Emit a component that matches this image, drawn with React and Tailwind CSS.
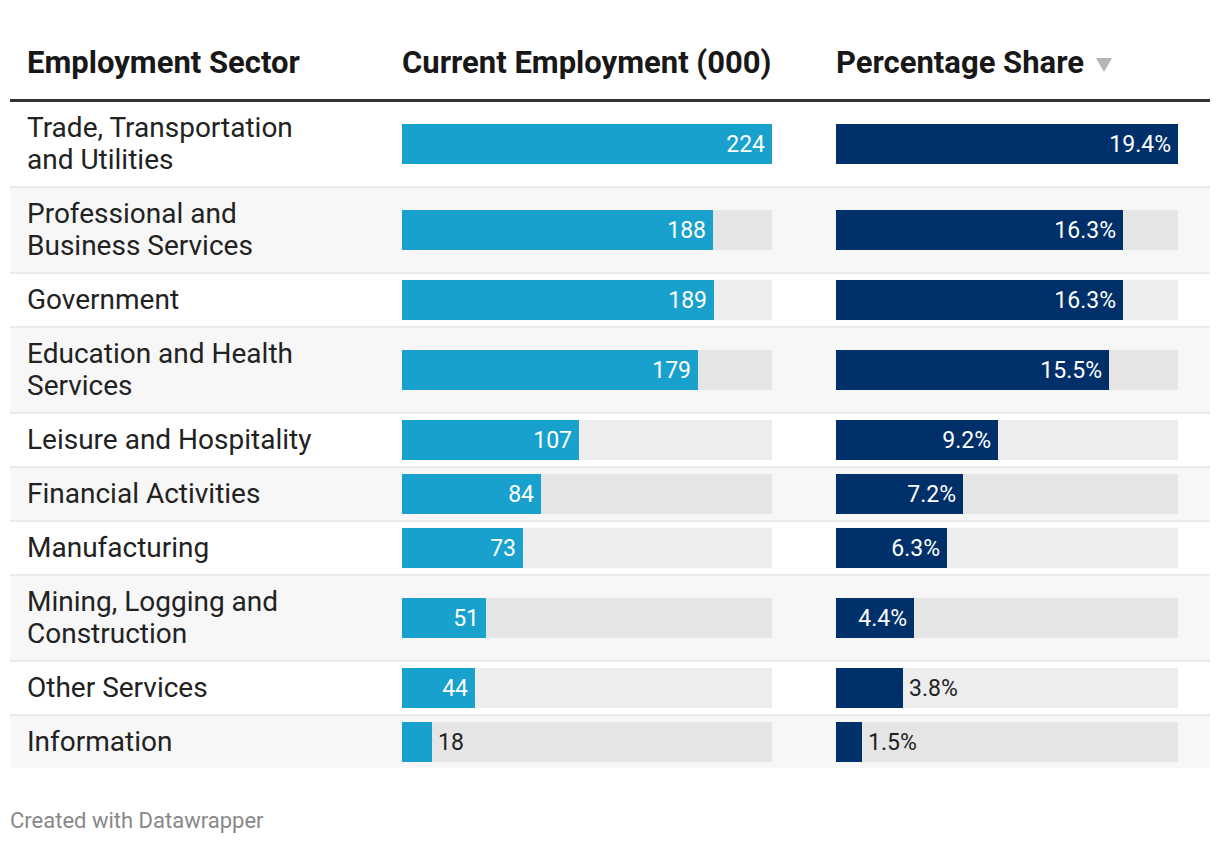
import React from 'react';

const ROWS = [
  { sector: ['Trade, Transportation', 'and Utilities'], jobs: 224, share: 19.4 },
  { sector: ['Professional and', 'Business Services'], jobs: 188, share: 16.3 },
  { sector: ['Government'], jobs: 189, share: 16.3 },
  { sector: ['Education and Health', 'Services'], jobs: 179, share: 15.5 },
  { sector: ['Leisure and Hospitality'], jobs: 107, share: 9.2 },
  { sector: ['Financial Activities'], jobs: 84, share: 7.2 },
  { sector: ['Manufacturing'], jobs: 73, share: 6.3 },
  { sector: ['Mining, Logging and', 'Construction'], jobs: 51, share: 4.4 },
  { sector: ['Other Services'], jobs: 44, share: 3.8 },
  { sector: ['Information'], jobs: 18, share: 1.5 },
];

const MAX_JOBS = 224;
const MAX_SHARE = 19.4;

// bar with label inside when it fits, otherwise after the bar
const Bar = ({ value, max, width, color, label, minInside }) => {
  const w = Math.round((value / max) * width);
  const inside = w >= minInside;
  return (
    <div className="flex h-10 my-[6px] bg-[rgba(0,0,0,0.07)]" style={{ width }}>
      <div
        className={`h-full flex items-center justify-end pr-[7px] ${color}`}
        style={{ width: w }}
      >
        {inside && <span className="text-white text-[23px] leading-none">{label}</span>}
      </div>
      {!inside && (
        <span className="flex items-center pl-[6px] text-[23px] leading-none text-[#222]">{label}</span>
      )}
    </div>
  );
};

export default function App() {
  return (
    <div className="w-[1220px] h-[844px] bg-white font-['Roboto',sans-serif] pl-[10px] pr-[10px]">
      <div className="grid grid-cols-[392px_434px_374px] pt-[45px] pb-[18px] border-b-[3px] border-[#333] text-[31px] font-bold leading-9 text-[#181818]">
        <div className="pl-[17px]">Employment Sector</div>
        <div>Current Employment (000)</div>
        <div className="flex items-center gap-3">
          Percentage Share
          <svg width="16" height="14" viewBox="0 0 16 14" className="mt-1">
            <polygon points="0,0 16,0 8,14" fill="#b5b5b5" />
          </svg>
        </div>
      </div>
      {ROWS.map((r, i) => (
        <div
          key={r.sector.join(' ')}
          className={`grid grid-cols-[392px_434px_374px] items-center ${
            i % 2 ? 'bg-[#f7f7f7]' : 'bg-white'
          } ${i < ROWS.length - 1 ? 'border-b-2 border-[#ebebeb]' : ''}`}
        >
          <div className="pl-[17px] py-[10px] text-[28px] leading-8 text-[#222]">
            {r.sector.map((s) => (
              <div key={s}>{s}</div>
            ))}
          </div>
          <Bar value={r.jobs} max={MAX_JOBS} width={370} color="bg-[#18a1cd]" label={r.jobs} minInside={50} />
          <Bar
            value={r.share}
            max={MAX_SHARE}
            width={342}
            color="bg-[#003069]"
            label={`${r.share.toFixed(1)}%`}
            minInside={75}
          />
        </div>
      ))}
      <div className="pt-[41px] text-[22px] leading-6 text-[#888]">Created with Datawrapper</div>
    </div>
  );
}
